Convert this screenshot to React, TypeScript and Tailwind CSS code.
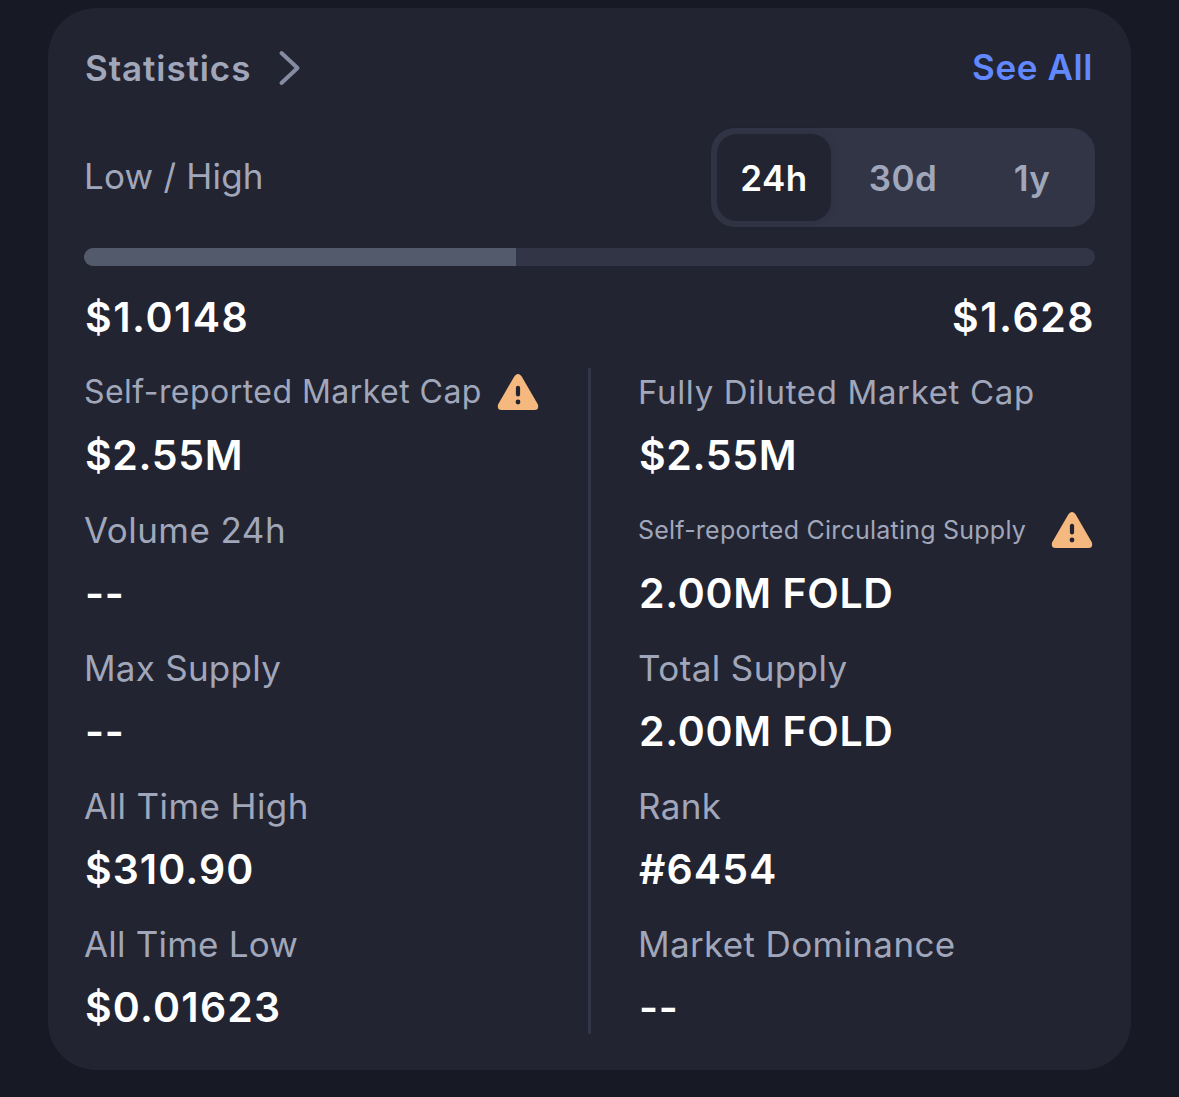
import React from "react";

function Warning() {
  return (
    <svg className="block h-[38px] w-[42px] shrink-0" viewBox="0 0 42 38">
      <path d="M17.6 2.9Q21 -1 24.4 2.9L40.8 31.2Q42.4 37 37.4 37H4.6Q-.4 37 1.2 31.2Z" fill="#f5b97f" />
      <path d="M21 14.8V21.5" stroke="#222431" strokeWidth="4.2" strokeLinecap="round" />
      <circle cx="21" cy="29" r="2.4" fill="#222431" />
    </svg>
  );
}

type StatProps = { label: string; value: string; warn?: boolean; labelClass?: string; valueClass?: string };

function Stat({
  label,
  value,
  warn,
  labelClass = "text-[35px] tracking-[0.35px]",
  valueClass = "tracking-[0.65px]",
}: StatProps) {
  return (
    <div className="h-[138px] whitespace-nowrap">
      <div className="flex h-[48px] items-center text-[#a1a7bb]">
        <span className={labelClass}>{label}</span>
        {warn && <Warning />}
      </div>
      <div className={"mt-[14px] h-[50px] pl-px text-[41px] leading-[50px] font-semibold text-white " + valueClass}>{value}</div>
    </div>
  );
}

const left: StatProps[] = [
  { label: "Self-reported Market Cap", value: "$2.55M", warn: true, labelClass: "w-[413px] text-[32px] tracking-[0.46px]" },
  { label: "Volume 24h", value: "--", labelClass: "text-[35px] tracking-[0.45px]" },
  { label: "Max Supply", value: "--", labelClass: "text-[35px] tracking-[0.25px]" },
  { label: "All Time High", value: "$310.90", labelClass: "text-[35px] tracking-[0.4px]", valueClass: "tracking-[1.05px]" },
  { label: "All Time Low", value: "$0.01623", labelClass: "text-[35px] tracking-[0.2px]", valueClass: "tracking-[1.2px]" },
];

const right: StatProps[] = [
  { label: "Fully Diluted Market Cap", value: "$2.55M", labelClass: "pt-0.5 text-[33px] tracking-[0.65px]" },
  { label: "Self-reported Circulating Supply", value: "2.00M FOLD", warn: true, labelClass: "w-[413px] pt-px text-[25px] tracking-[0.23px]" },
  { label: "Total Supply", value: "2.00M FOLD", labelClass: "text-[35px] tracking-[0.4px]" },
  { label: "Rank", value: "#6454", valueClass: "tracking-[1.1px]" },
  { label: "Market Dominance", value: "--", labelClass: "text-[35px] tracking-[0.35px]" },
];

export default function App() {
  return (
    <main className="h-[1097px] w-[1179px] overflow-hidden bg-[#171924] px-12 pt-2 font-['Inter',sans-serif]">
      <section className="h-[1062px] w-[1083px] rounded-[48px] bg-[#222431] px-9 pt-8">
        <header className="flex h-14 items-center justify-between text-[35px] font-semibold">
          <div className="flex items-center text-[#a1a7bb]">
            <h1 className="w-[193px] pl-px tracking-[0.9px]">Statistics</h1>
            <svg className="h-9 w-6" viewBox="0 0 24 36" fill="none" stroke="#858ca2" strokeWidth="4" strokeLinecap="round" strokeLinejoin="round">
              <path d="M4.5 3L20.5 18L4.5 33" />
            </svg>
          </div>
          <a className="pr-0.5 pb-0.5 tracking-[0.6px] text-[#6188ff]">See All</a>
        </header>
        <div className="mt-8 flex h-[99px] items-center justify-between">
          <span className="pb-0.5 text-[35px] tracking-[0.2px] text-[#a1a7bb]">Low / High</span>
          <div className="flex h-[99px] w-[384px] rounded-[24px] bg-[#323546] p-1.5 text-[35px] font-semibold tracking-[0.5px] text-[#a1a7bb]">
            <button className="w-[114px] rounded-[20px] bg-[#222431] pt-0.5 text-white shadow-[0_0_8px_#22243140]">24h</button>
            <button className="w-[144px] pt-0.5">30d</button>
            <button className="w-[114px] pt-0.5">1y</button>
          </div>
        </div>
        <div className="mt-[21px] h-[18px] overflow-hidden rounded-full bg-[#323546]">
          <div className="h-full w-[432px] bg-[#535a6c]" />
        </div>
        <div className="mt-[26px] flex h-[50px] justify-between pl-px text-[41px] leading-[50px] font-semibold tracking-[1.5px] text-white">
          <span>$1.0148</span>
          <span>$1.628</span>
        </div>
        <div className="mt-[26px] flex h-[666px]">
          <div className="w-[504px]">{left.map((s) => <Stat key={s.label} {...s} />)}</div>
          <div className="w-[3px] bg-[#323546]" />
          <div className="pl-[47px]">{right.map((s) => <Stat key={s.label} {...s} />)}</div>
        </div>
      </section>
    </main>
  );
}
